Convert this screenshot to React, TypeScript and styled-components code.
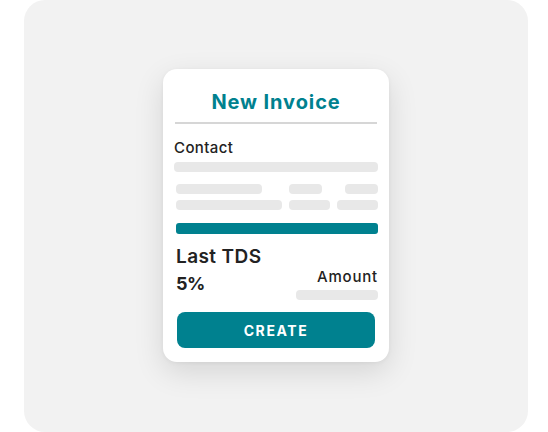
import React from "react";
import styled, { createGlobalStyle } from "styled-components";

const Global = createGlobalStyle`
  html, body { margin: 0; padding: 0; background: #ffffff; }
  body { font-family: Inter, "Noto Sans", sans-serif; }
`;

const Page = styled.div`
  width: 548px;
  height: 432px;
  padding: 0 20px 0 24px;
  box-sizing: border-box;
`;

const Panel = styled.div`
  width: 504px;
  height: 432px;
  background: #f2f2f2;
  border-radius: 21px;
  display: flex;
  align-items: center;
  justify-content: center;
`;

const Card = styled.div`
  width: 226px;
  height: 293px;
  box-sizing: border-box;
  background: #ffffff;
  border-radius: 14px;
  box-shadow: 0 10px 30px rgba(0, 0, 0, 0.12), 0 1px 4px rgba(0, 0, 0, 0.05);
  padding: 21px 11px 0 11px;
  display: flex;
  flex-direction: column;
  margin-top: -1px;
`;

const Title = styled.div`
  font-size: 20px;
  font-weight: 700;
  color: #00818f;
  text-align: center;
  letter-spacing: 0.9px;
  line-height: 24px;
  padding-bottom: 8px;
  margin: 0 1px;
  border-bottom: 2px solid #d6d6d6;
`;

const Label = styled.div<{ $size: number; $weight: number; $spacing?: number }>`
  font-size: ${(p) => p.$size}px;
  font-weight: ${(p) => p.$weight};
  color: #222222;
  line-height: 1;
  letter-spacing: ${(p) => (p.$spacing ?? 0.4)}px;
`;

const Bar = styled.div<{ $w?: number }>`
  height: 10px;
  width: ${(p) => (p.$w ? p.$w + "px" : "auto")};
  background: #e8e8e8;
  border-radius: 4px;
`;

const ContactBlock = styled.div`
  margin-top: 16px;
  display: flex;
  flex-direction: column;
  gap: 7px;
`;

const Grid = styled.div`
  margin: 12px 0 0 2px;
  display: grid;
  grid-template-columns: 106px 41px 41px;
  column-gap: 7px;
  row-gap: 6px;
  justify-content: space-between;
`;

const Cell = styled.div<{ $w: number; $end?: boolean }>`
  height: 10px;
  width: ${(p) => p.$w}px;
  justify-self: ${(p) => (p.$end ? "end" : "start")};
  background: #e8e8e8;
  border-radius: 4px;
`;

const TealBar = styled.div`
  margin: 13px 0 0 2px;
  height: 11px;
  background: #00818f;
  border-radius: 3px;
`;

const TdsRow = styled.div`
  margin: 13px 0 0 2px;
  display: flex;
  justify-content: space-between;
  align-items: flex-start;
`;

const TdsCol = styled.div`
  display: flex;
  flex-direction: column;
  gap: 9px;
`;

const AmountCol = styled.div`
  display: flex;
  flex-direction: column;
  align-items: flex-end;
  gap: 6px;
  padding-top: 22px;
`;

const Button = styled.button`
  margin: 12px 3px 0 3px;
  height: 36px;
  border: none;
  border-radius: 8px;
  background: #00818f;
  color: #ffffff;
  font-family: Inter, "Noto Sans", sans-serif;
  font-size: 14px;
  font-weight: 700;
  letter-spacing: 1.6px;
  padding: 0;
`;

export default function App() {
  return (
    <>
      <Global />
      <Page>
        <Panel>
          <Card>
            <Title>New Invoice</Title>
            <ContactBlock>
              <Label $size={15} $weight={500}>Contact</Label>
              <Bar />
            </ContactBlock>
            <Grid>
              <Cell $w={86} />
              <Cell $w={33} />
              <Cell $w={33} $end />
              <Cell $w={106} />
              <Cell $w={41} />
              <Cell $w={41} $end />
            </Grid>
            <TealBar />
            <TdsRow>
              <TdsCol>
                <Label $size={19} $weight={600}>Last TDS</Label>
                <Label $size={18} $weight={700} $spacing={-0.6}>5%</Label>
              </TdsCol>
              <AmountCol>
                <Label $size={15} $weight={500} $spacing={0.8}>Amount</Label>
                <Bar $w={82} />
              </AmountCol>
            </TdsRow>
            <Button>CREATE</Button>
          </Card>
        </Panel>
      </Page>
    </>
  );
}
